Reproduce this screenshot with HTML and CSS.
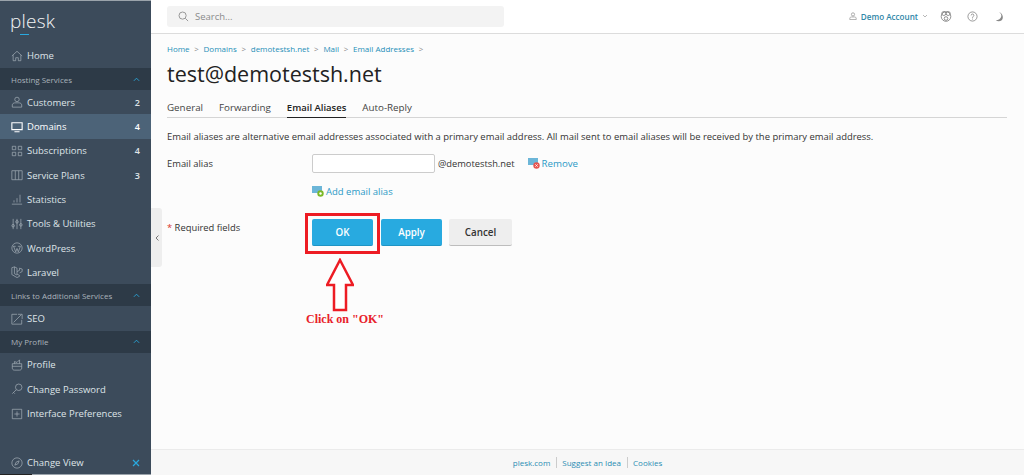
FILE: index.html
```html
<!DOCTYPE html>
<html lang="en">
<head>
<meta charset="utf-8">
<title>test@demotestsh.net</title>
<link rel="stylesheet" href="styles.css">
</head>
<body>
<div class="app">
  <aside class="sidebar">
    <div class="logo"><span class="logo-p">p</span><span class="logo-l">l</span>esk</div>
    <a class="nav-item"><svg class="ico" viewBox="0 0 14 14"><path d="M1 7 7 1.500 13 7M2.500 6v6.500h3V9h3v3.500h3V6"/></svg>Home</a>
    <div class="nav-head"><span>Hosting Services</span><svg class="chev" viewBox="0 0 8 5"><path d="M1 4 4 1l3 3"/></svg></div>
    <a class="nav-item"><svg class="ico" viewBox="0 0 14 14"><circle cx="7" cy="4" r="2.600"/><path d="M1.500 13v-2.500c0-1.500 1.500-2.500 3-2.500h5c1.500 0 3 1 3 2.500V13z"/></svg>Customers<b>2</b></a>
    <a class="nav-item active"><svg class="ico" viewBox="0 0 14 14"><path d="M1 2h12v8H1zM4 12.500h6"/></svg>Domains<b>4</b></a>
    <a class="nav-item"><svg class="ico" viewBox="0 0 14 14"><path d="M1.500 1.500h4v4h-4zM8.500 1.500h4v4h-4zM1.500 8.500h4v4h-4zM8.500 8.500h4v4h-4z"/></svg>Subscriptions<b>4</b></a>
    <a class="nav-item"><svg class="ico" viewBox="0 0 14 14"><path d="M1 2h12v10.500H1zM5 2v10.500M9 2v10.500"/></svg>Service Plans<b>3</b></a>
    <a class="nav-item"><svg class="ico" viewBox="0 0 14 14"><path d="M1 13h12M3.500 11V8.500M7 11V6M10.500 11V2"/></svg>Statistics</a>
    <a class="nav-item"><svg class="ico" viewBox="0 0 14 14"><path d="M2.500 1v12M7 1v12M11.500 1v12"/><circle cx="2.500" cy="9" r="1.500"/><circle cx="7" cy="4.500" r="1.500"/><circle cx="11.500" cy="8" r="1.500"/></svg>Tools &amp; Utilities</a>
    <a class="nav-item"><svg class="ico" viewBox="0 0 14 14"><circle cx="7" cy="7" r="6"/><path d="M3 5l2.500 6.500L7 7.500l1.500 4L11 5M2.500 5h3M8 5h3"/></svg>WordPress</a>
    <a class="nav-item"><svg class="ico" viewBox="0 0 14 14"><path d="M1 2l3-1 3 1.500v7L10 11M1 2v8l6 3.500 3-1.500V11M4 1v8l3 1.500M7 6.500l3-1.500V2.500l3 1v3l-3 1.500"/></svg>Laravel</a>
    <div class="nav-head"><span>Links to Additional Services</span><svg class="chev" viewBox="0 0 8 5"><path d="M1 4 4 1l3 3"/></svg></div>
    <a class="nav-item"><svg class="ico" viewBox="0 0 14 14"><path d="M7 1.500H1v11.500h11.500V8M3 11l9-9M8 1.500h5V7"/></svg>SEO</a>
    <div class="nav-head"><span>My Profile</span><svg class="chev" viewBox="0 0 8 5"><path d="M1 4 4 1l3 3"/></svg></div>
    <a class="nav-item"><svg class="ico" viewBox="0 0 14 14"><path d="M1.500 5.500h11v5c0 1.500-1 2.500-2.500 2.500H4c-1.500 0-2.500-1-2.500-2.500zM1.500 8.500h11M4 5.500V3l3 1 3-3 0 4.500"/></svg>Profile</a>
    <a class="nav-item"><svg class="ico" viewBox="0 0 14 14"><circle cx="9" cy="5" r="3.800"/><path d="M6 8 1.500 12.500M3 11l1.500 1.500"/></svg>Change Password</a>
    <a class="nav-item"><svg class="ico" viewBox="0 0 14 14"><path d="M1.500 1.500h11v11h-11zM7 4v6M4 7h6"/></svg>Interface Preferences</a>
    <a class="nav-item nav-foot"><svg class="ico" viewBox="0 0 14 14"><circle cx="7" cy="7" r="6"/><path d="M4.500 9.500 6 6l3.500-1.500L8 8z"/></svg>Change View<svg class="close" viewBox="0 0 8 8"><path d="M1 1l6 6M7 1 1 7"/></svg></a>
  </aside>
  <div class="main">
    <header class="topbar">
      <div class="search"><svg class="search-ico" viewBox="0 0 12 12"><circle cx="5" cy="5" r="3.900"/><path d="M8 8l3 3"/></svg><span>Search...</span></div>
      <div class="account">
        <svg class="user-ico" viewBox="0 0 10 10"><circle cx="5" cy="3" r="2"/><path d="M1 9.500V8c0-1 1-1.800 2-1.800h4c1 0 2 .8 2 1.800v1.500z"/></svg>
        <span class="account-name">Demo Account</span>
        <svg class="caret" viewBox="0 0 6 4"><path d="M1 1l2 2 2-2"/></svg>
      </div>
      <svg class="top-ico bear" viewBox="0 0 12 12"><circle cx="6" cy="6.500" r="4.800"/><circle cx="3.800" cy="3.500" r="2"/><circle cx="8.200" cy="3.500" r="2"/><circle cx="6" cy="8.500" r="1.800"/></svg>
      <svg class="top-ico" viewBox="0 0 12 12"><circle cx="6" cy="6" r="5"/><path d="M4.500 4.800C4.500 3.800 5.200 3.300 6 3.300s1.500.6 1.500 1.400C7.500 6 6 6 6 7.500M6 8.300v1"/></svg>
      <svg class="top-ico moon" viewBox="0 0 12 12"><path d="M6.500 1c2 1.500 3 3 2.500 5-.5 2.500-3 4-6 4 2 1.500 4.500 1.500 6.500 0 2-2 2-7-3-9z"/></svg>
    </header>
    <main class="content">
      <nav class="crumbs"><a>Home</a><i>&gt;</i><a>Domains</a><i>&gt;</i><a>demotestsh.net</a><i>&gt;</i><a>Mail</a><i>&gt;</i><a>Email Addresses</a><i>&gt;</i></nav>
      <h1 class="title">test@demotestsh.net</h1>
      <div class="tabs">
        <a class="tab">General</a><a class="tab">Forwarding</a><a class="tab current">Email Aliases</a><a class="tab">Auto-Reply</a>
      </div>
      <p class="intro">Email aliases are alternative email addresses associated with a primary email address. All mail sent to email aliases will be received by the primary email address.</p>
      <div class="form-row">
        <label class="label">Email alias</label>
        <div class="field">
          <input class="input" type="text" aria-label="Email alias">
          <span class="domain">@demotestsh.net</span>
          <a class="remove"><svg class="alias-ico" viewBox="0 0 12 11"><path class="mail" d="M0 0h10v7H0z"/><circle class="red" cx="8.500" cy="7.500" r="3.200"/><path class="x" d="M7.300 6.300l2.400 2.400M9.700 6.300 7.300 8.700"/></svg>Remove</a>
        </div>
      </div>
      <a class="add"><svg class="alias-ico" viewBox="0 0 12 11"><path class="mail" d="M0 0h10v7H0z"/><circle class="green" cx="8.500" cy="7.500" r="3.200"/><circle class="hole" cx="8.500" cy="7.500" r="1.200"/></svg>Add email alias</a>
      <div class="actions">
        <div class="required"><span class="star">*</span> Required fields</div>
        <div class="buttons">
          <button class="btn primary">OK</button>
          <button class="btn primary apply">Apply</button>
          <button class="btn cancel">Cancel</button>
        </div>
      </div>
    </main>
    <footer class="footer"><a>plesk.com</a><a>Suggest an Idea</a><a>Cookies</a></footer>
    <div class="collapse"><svg viewBox="0 0 4 6"><path d="M3.500 .5 1 3l2.500 2.500"/></svg></div>
    <div class="highlight"></div>
    <svg class="arrow" viewBox="0 0 28 54"><path d="M14 2 27 27H20V52H8V27H1z"/></svg>
    <div class="callout">Click on "OK"</div>
  </div>
</div>
</body>
</html>
```
FILE: styles.css
```css
* { box-sizing: border-box; }
html, body { margin: 0; height: 100%; overflow: hidden; }
body { font-family: "Open Sans", sans-serif; font-size: 10px; color: #222; background: #fff; }
a { color: #1f8fb8; text-decoration: none; }
.app { display: flex; height: 475px; }

.sidebar { width: 151px; flex: none; background: #3c4b5b; border-top: 1px solid #9aa3ab; display: flex; flex-direction: column; color: #e3e7ea; position: relative; }
.sidebar::after { content: ""; position: absolute; left: 0; right: 0; bottom: 0; height: 1px; background: linear-gradient(to right, #222 32px, #9aa3ab 32px); }
.logo { height: 42.800px; padding: 8px 0 0 10px; font-size: 19px; line-height: 24px; letter-spacing: .2px; color: #f2f4f5; font-weight: 300; }
.logo-l { position: relative; }
.logo-l::after { content: ""; position: absolute; left: -2px; bottom: -1px; width: 9px; height: 1px; background: #29a9df; }
.nav-item { height: 24.300px; display: flex; align-items: center; padding: 0 11px; color: #dfe4e8; font-size: 9.500px; flex: none; }
.nav-item b { margin-left: auto; font-weight: 600; font-size: 9px; }
.nav-item.active { background: #4c6378; color: #fff; }
.nav-item.active .ico { stroke: #fff; stroke-width: 1.300; }
.ico { width: 12px; height: 12px; margin-right: 4px; fill: none; stroke: #a7b1ba; stroke-width: .8; flex: none; }
.nav-head { height: 22px; background: #2d3a47; display: flex; align-items: center; justify-content: space-between; padding: 0 11px; font-size: 8px; color: #aab3bb; flex: none; margin: 0; }
.chev { width: 7px; height: 5px; fill: none; stroke: #29a9df; stroke-width: 1; }
.nav-foot { margin-top: auto; position: relative; }
.close { width: 8px; height: 8px; margin-left: auto; fill: none; stroke: #29a9df; stroke-width: 1.200; }

.main { flex: 1; display: flex; flex-direction: column; position: relative; min-width: 0; background: #fcfcfc; }
.topbar { height: 34px; flex: none; background: #fff; border-bottom: 1px solid #dcdcdc; display: flex; align-items: center; padding: 0 20px 1px 16px; }
.search { width: 337px; height: 21px; border-radius: 3px; background: #f3f3f3; display: flex; align-items: center; padding-left: 11px; color: #8a8a8a; font-size: 9.500px; }
.search-ico { width: 11px; height: 11px; margin-right: 6px; fill: none; stroke: #8f8f8f; stroke-width: 1; }
.account { margin-left: auto; display: flex; align-items: center; font-size: 8.100px; font-weight: 600; color: #2f86a8; margin-right: 12px; }
.user-ico { width: 8px; height: 8px; margin-right: 4px; fill: none; stroke: #8f8f8f; stroke-width: .9; }
.caret { width: 6px; height: 4px; margin-left: 4px; fill: none; stroke: #999; stroke-width: .7; }
.top-ico { width: 11px; height: 11px; fill: none; stroke: #777; stroke-width: .8; margin-left: 15px; }
.bear { margin-left: 0; width: 12px; height: 12px; }
.moon { fill: #888; stroke: none; }

.content { flex: 1; padding: 9px 17px 0 16px; display: flex; flex-direction: column; align-items: flex-start; }
.crumbs { display: flex; align-items: center; gap: 4.700px; height: 11px; font-size: 8px; line-height: 11px; }
.crumbs i { font-style: normal; color: #888; font-size: 8px; }
.title { margin: 5px 0 0; font-size: 21.500px; font-weight: 400; line-height: 29px; color: #222; }
.tabs { align-self: stretch; display: flex; gap: 16px; margin-top: 10px; height: 20px; border-bottom: 1px solid #d5d5d5; font-size: 9.800px; }
.tab { color: #444; line-height: 20px; height: 20px; }
.tab.current { color: #222; font-weight: 600; font-size: 9.500px; border-bottom: 1px solid #222; }
.intro { margin: 12px 0 0; font-size: 9.450px; line-height: 14px; color: #333; white-space: nowrap; }
.form-row { display: flex; margin-top: 10px; align-items: center; }
.label { width: 145px; font-size: 9.400px; color: #333; line-height: 14px; padding-top: 1px; }
.field { display: flex; align-items: center; height: 19px; font-size: 9.300px; color: #333; }
.input { width: 123px; height: 19px; border: 1px solid #ccc; border-radius: 2px; background: #fff; padding: 0; margin: 0 3px 0 0; }
.remove { margin-left: 13px; display: flex; align-items: center; color: #2b9ac6; font-size: 9.700px; }
.add { margin: 12px 0 0 145px; display: flex; align-items: center; color: #2b9ac6; font-size: 9.500px; line-height: 13px; }
.alias-ico { width: 12px; height: 11px; margin-right: 2px; }
.mail { fill: #6cb6d8; }
.red { fill: #e8544e; }
.green { fill: #7cb927; }
.hole { fill: #fff; }
.x { stroke: #fff; stroke-width: .8; fill: none; }
.actions { display: flex; margin-top: 21px; }
.required { width: 145px; font-size: 9.400px; color: #333; line-height: 14px; padding-top: 2px; }
.star { color: #d8342c; }
.buttons { display: flex; gap: 7px; }
.btn { height: 27px; border: 0; border-radius: 2px; font-family: inherit; font-size: 9.800px; font-weight: 600; padding: 0; }
.primary { width: 61px; background: #28aae0; color: #fff; border-bottom: 1px solid #1f94c4; }
.apply { margin-left: 1px; }
.cancel { width: 63px; background: #eeeeee; color: #333; border-bottom: 1px solid #bdbdbd; }

.footer { height: 26px; flex: none; background: #f7f7f7; border-top: 1px solid #ebebeb; display: flex; align-items: center; justify-content: center; font-size: 8px; }
.footer a { color: #2b8db3; padding: 0 5.500px; line-height: 11px; }
.footer a + a { border-left: 1px solid #ccc; }

.collapse { position: absolute; left: 0; top: 208px; width: 11px; height: 59px; background: #eeeeee; border-radius: 0 3px 3px 0; display: flex; align-items: center; justify-content: center; }
.collapse svg { width: 4px; height: 6px; fill: none; stroke: #555; stroke-width: .8; }
.highlight { position: absolute; left: 154px; top: 213px; width: 75px; height: 41px; border: 3px solid #ed1c24; }
.arrow { position: absolute; left: 175px; top: 258px; width: 28px; height: 54px; fill: #fff; stroke: #ed1c24; stroke-width: 2.500; }
.callout { position: absolute; left: 155px; top: 312px; font-family: "Liberation Serif", serif; font-weight: 700; font-size: 12px; line-height: 15px; color: #e8212a; white-space: nowrap; }
```
